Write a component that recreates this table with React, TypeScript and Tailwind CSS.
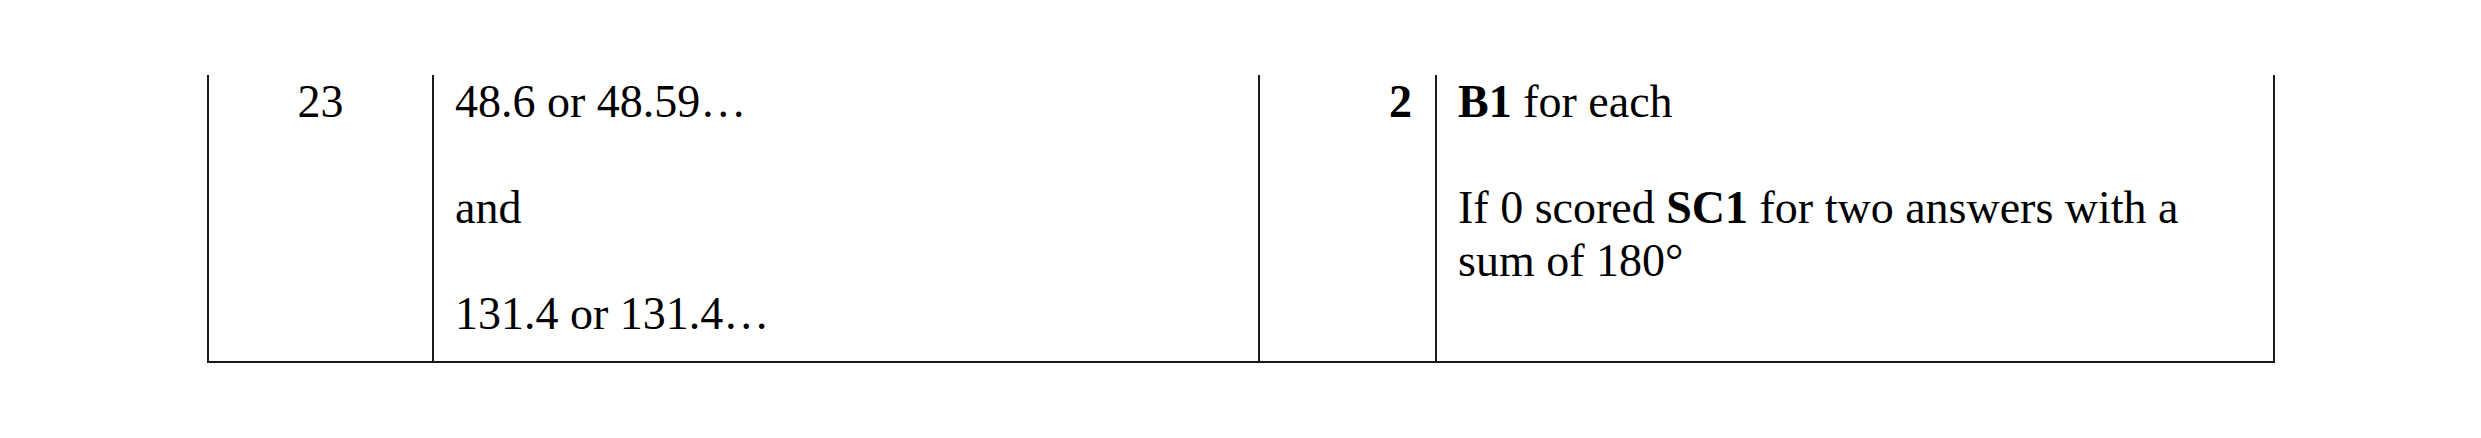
export default function App() {
  return (
    <div className="h-[438px] w-[2481px] bg-white pt-[75px] font-['Liberation_Serif','Times_New_Roman',serif] text-[46px] leading-[53px] text-black">
      {/* mark scheme row, top of table cropped off */}
      <div className="ml-[207px] flex h-[288px] w-[2068px] border-b-2 border-[#1a1a1a]">
        <div className="w-[225px] shrink-0 border-l-2 border-[#1a1a1a] text-center">23</div>
        <div className="w-[826px] shrink-0 border-l-2 border-[#1a1a1a] pl-[21px]">
          <p>48.6 or 48.59…</p>
          <p>&nbsp;</p>
          <p>and</p>
          <p>&nbsp;</p>
          <p>131.4 or 131.4…</p>
        </div>
        <div className="w-[177px] shrink-0 border-l-2 border-[#1a1a1a] pr-[23px] text-right font-bold">2</div>
        <div className="w-[840px] shrink-0 border-x-2 border-[#1a1a1a] pl-[21px] pr-[22px]">
          <p>
            <span className="font-bold">B1</span> for each
          </p>
          <p>&nbsp;</p>
          <p>
            If 0 scored <span className="font-bold">SC1</span> for two answers with a sum of 180°
          </p>
        </div>
      </div>
    </div>
  )
}
